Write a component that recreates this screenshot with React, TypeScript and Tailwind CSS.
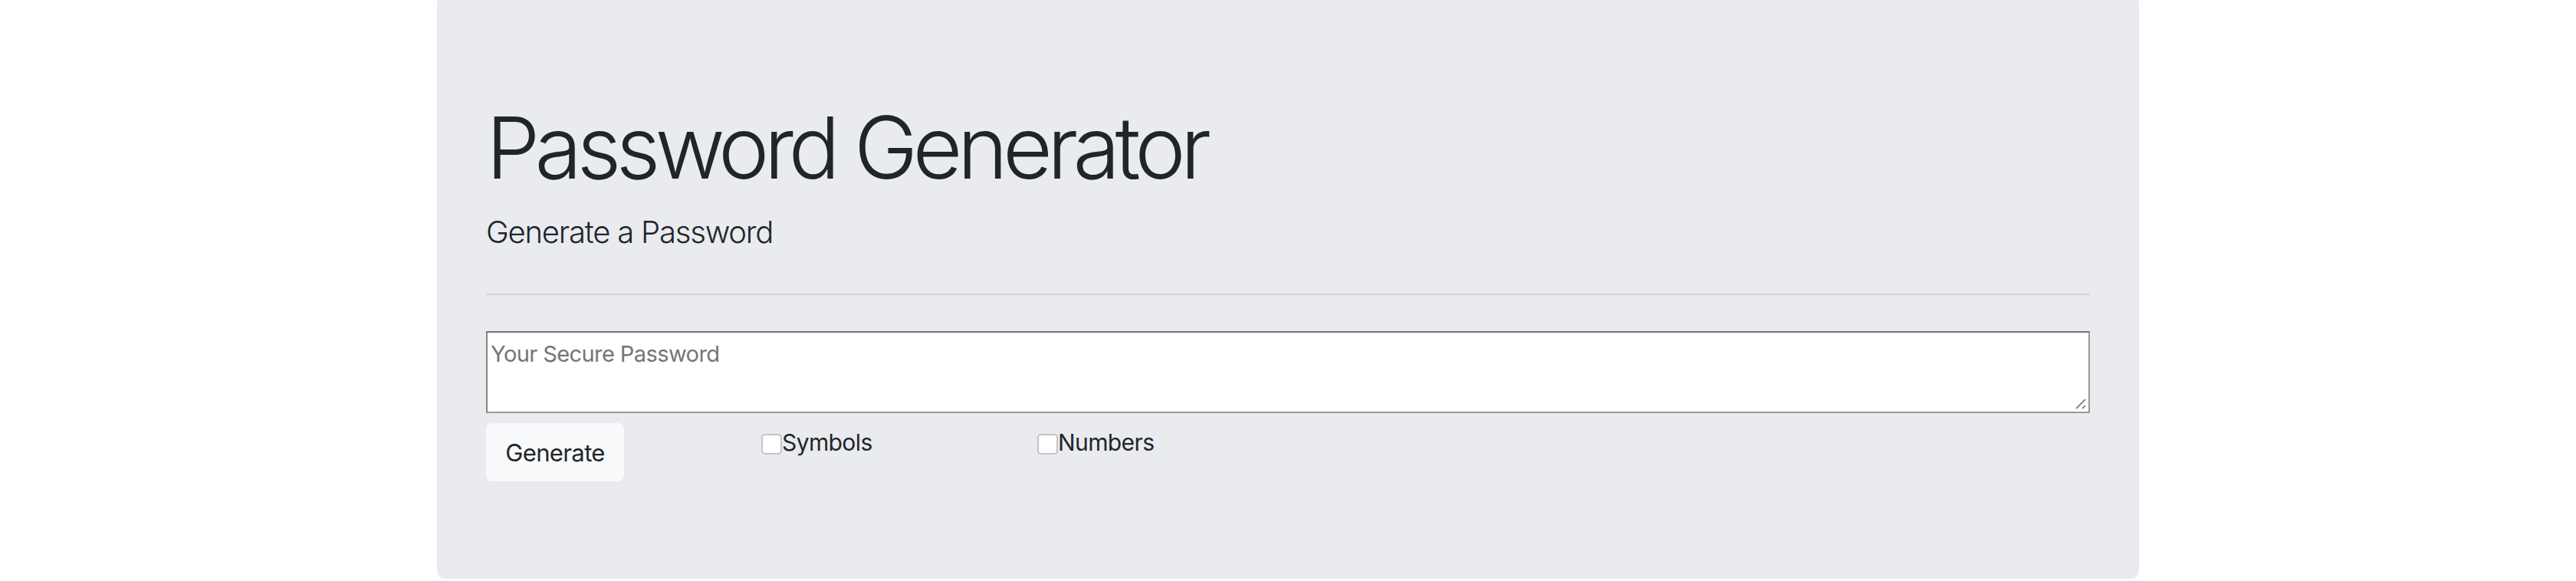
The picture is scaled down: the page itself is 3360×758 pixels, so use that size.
import React, { useState } from "react";

export default function App() {
  const [pwd, pwdSet] = useState("");
  const [symbol, symbolSet] = useState(false);
  const [number, numberSet] = useState(false);

  // Build a password from the selected sets
  const generate = () => {
    let chars = "abcdefghijklmnopqrstuvwxyzABCDEFGHIJKLMNOPQRSTUVWXYZ";
    if (symbol) chars += "!@#$%^&*()_+-=";
    if (number) chars += "0123456789";
    let out = "";
    for (let i = 0; i < 16; i++) out += chars[Math.floor(Math.random() * chars.length)];
    pwdSet(out);
  };

  return (
    <div className="w-full min-h-[758px] bg-white flex justify-center font-['Inter',sans-serif] text-[#212529]">
      <div className="w-[2220px] h-[755px] bg-[#e9ebef] rounded-b-[10px] rounded-t-[4px] px-[64px] pt-[125px]">
        <h1 className="text-[112px] font-light leading-[1.2] tracking-[-0.06em] mb-[14px]">Password Generator</h1>
        <p className="text-[40px] font-light leading-[1.5] tracking-[-0.03em]">Generate a Password</p>
        <hr className="mt-[50px] mb-[47px] border-0 border-t-2 border-[#d3d5d9]" />
        <div className="relative">
          <textarea
            className="block w-full h-[107px] bg-white border-2 border-t-[#767676] border-l-[#858585] border-r-[#9a9a9a] border-b-[#9a9a9a] px-[4px] pt-[11px] text-[29px] leading-[1.2] tracking-[-0.02em] resize-none outline-none placeholder:text-[#757575]"
            placeholder="Your Secure Password"
            value={pwd}
            readOnly
          />
          <svg className="absolute right-[4px] bottom-[4px]" width="16" height="16" viewBox="0 0 16 16">
            <path d="M2 14 L14 2 M10 14 L14 10" stroke="#6b6b6b" strokeWidth="1.6" />
          </svg>
        </div>
        <div className="grid grid-cols-[359px_360px_1fr] mt-[13px]">
          <div>
            <button
              className="w-[180px] h-[76px] bg-[#f8f9fa] rounded-[8px] text-[31px] tracking-[-0.02em] leading-none"
              onClick={generate}
            >
              Generate
            </button>
          </div>
          <label className="flex items-start mt-[14px] text-[30px] tracking-[-0.02em] leading-[20px]">
            <input
              type="checkbox"
              checked={symbol}
              onChange={(e) => symbolSet(e.currentTarget.checked)}
              className="appearance-none w-[27px] h-[27px] bg-white border-2 border-[#c4c4c4] rounded-[5px] shrink-0"
            />
            <span className="pt-[1px]">Symbols</span>
          </label>
          <label className="flex items-start mt-[14px] text-[30px] tracking-[-0.02em] leading-[20px]">
            <input
              type="checkbox"
              checked={number}
              onChange={(e) => numberSet(e.currentTarget.checked)}
              className="appearance-none w-[27px] h-[27px] bg-white border-2 border-[#c4c4c4] rounded-[5px] shrink-0"
            />
            <span className="pt-[1px]">Numbers</span>
          </label>
        </div>
      </div>
    </div>
  );
}
